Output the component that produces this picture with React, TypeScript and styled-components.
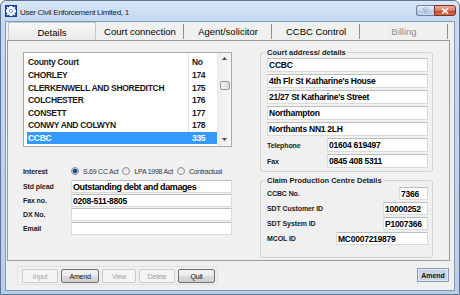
import styled, { createGlobalStyle } from 'styled-components'

const GlobalStyle = createGlobalStyle`
  html, body { margin: 0; padding: 0; }
  body {
    width: 460px;
    height: 295px;
    overflow: hidden;
    background: #fff;
    font-family: "Liberation Sans", Arial, sans-serif;
  }
  * { box-sizing: border-box; }
`

const Window = styled.div`
  width: 460px;
  height: 295px;
  display: flex;
  flex-direction: column;
  border: 1px solid #5e7592;
  border-radius: 6px 6px 0 0;
  background: linear-gradient(180deg, #d9e7f7 0px, #c5d9f0 20px, #b8cfea 100%);
`

const TitleBar = styled.div`
  height: 20px;
  display: flex;
  align-items: center;
  gap: 3px;
  padding: 0 3px 0 4px;
`

const TitleText = styled.span`
  font-size: 8px;
  letter-spacing: -0.3px;
  color: #1b1b1b;
  margin-top: 2px;
`

const CaptionButtons = styled.div`
  margin-left: auto;
  align-self: flex-start;
  margin-top: 4px;
  display: flex;
`

const HelpButton = styled.div`
  width: 18px;
  height: 11px;
  border: 1px solid #6f84a2;
  border-right: none;
  border-radius: 3px 0 0 3px;
  background: linear-gradient(180deg, #e4edf8 0%, #c6d6ea 50%, #b1c6e0 51%, #c9d9ed 100%);
  color: #fff;
  font-size: 8px;
  font-weight: bold;
  line-height: 9px;
  text-align: center;
  text-shadow: 0 0 1px #3e5572, 0 0 1px #3e5572;
`

const CloseButton = styled.div`
  width: 22px;
  height: 11px;
  border: 1px solid #7c2f25;
  border-radius: 0 3px 3px 0;
  background: linear-gradient(180deg, #eab2a3 0%, #d77a64 50%, #c6422a 51%, #d66a4e 100%);
  display: flex;
  align-items: center;
  justify-content: center;
`

const Client = styled.div`
  flex: 1;
  margin: 0 4px 3px;
  border: 1px solid #8499b6;
  background: #f0f0f0;
  display: flex;
  flex-direction: column;
  padding: 0 4px 0 1px;
`

const TabStrip = styled.div`
  height: 18px;
  display: flex;
  padding-left: 1px;
`

const Tab = styled.div<{ $boxed?: boolean; $disabled?: boolean }>`
  width: 88px;
  height: 18px;
  display: flex;
  align-items: center;
  justify-content: center;
  font-size: 9.5px;
  color: ${p => (p.$disabled ? '#8e8e8e' : '#000')};
  border: ${p => (p.$boxed ? '1px solid #c8c8c8' : 'none')};
  border-bottom: none;
  background: ${p =>
    p.$boxed
      ? 'linear-gradient(180deg, #f7f7f7, #eaeaea)'
      : 'linear-gradient(#8f8f8f, #8f8f8f) right 2px / 1px 15px no-repeat'};
  padding-top: 1px;
`

const Panel = styled.div`
  height: 221px;
  border: 1px solid #9a9a9a;
  padding: 7px 16px 0 15px;
  display: grid;
  grid-template-columns: 209px 173px;
  column-gap: 28px;
  align-items: start;
`

const LeftColumn = styled.div`
  padding-top: 4px;
  display: flex;
  flex-direction: column;
`

const ListBox = styled.div`
  height: 95px;
  border: 1px solid #a3a9b1;
  background: #fff;
  display: flex;
  padding-left: 3px;
`

const ListRows = styled.div`
  flex: 1;
  display: flex;
  flex-direction: column;
`

const ListRow = styled.div<{ $header?: boolean; $selected?: boolean }>`
  height: ${p => (p.$header ? 16 : 12.5)}px;
  flex: none;
  display: flex;
  align-items: center;
  font-size: 8.5px;
  font-weight: bold;
  letter-spacing: -0.3px;
  color: ${p => (p.$selected ? '#fff' : '#1a1a1a')};
  background: ${p => (p.$selected ? '#3399ff' : 'transparent')};
  padding-top: ${p => (p.$header ? 1 : 0)}px;
`

const NameCell = styled.div`
  width: 161px;
  padding-left: 1px;
  white-space: nowrap;
`

const NoCell = styled.div<{ $selected?: boolean }>`
  flex: 1;
  align-self: stretch;
  display: flex;
  align-items: center;
  padding-left: 3px;
  border-left: 1px solid ${p => (p.$selected ? 'transparent' : '#e3e3e3')};
`

const ScrollBar = styled.div`
  width: 14px;
  background: linear-gradient(90deg, #ededed, #f7f7f7);
  border-left: 1px solid #ececec;
  display: flex;
  flex-direction: column;
`

const ScrollArrow = styled.div<{ $h: number }>`
  height: ${p => p.$h}px;
  display: flex;
  align-items: center;
  justify-content: center;
`

const ScrollThumb = styled.div`
  height: 9px;
  margin: 18px 1px 0 2px;
  border: 1px solid #9b9b9b;
  border-radius: 2px;
  background: linear-gradient(90deg, #f2f2f2, #dcdcdc);
`

const Spacer = styled.div`
  flex: 1;
`

const InterestRow = styled.div`
  margin-top: 18px;
  height: 12px;
  display: flex;
  align-items: center;
`

const FormLabel = styled.span<{ $w?: number }>`
  width: ${p => (p.$w ? `${p.$w}px` : 'auto')};
  flex: ${p => (p.$w ? 'none' : '1')};
  font-size: 7px;
  font-weight: bold;
  letter-spacing: -0.1px;
  color: #222;
  white-space: nowrap;
`

const RadioGroup = styled.div`
  display: flex;
  align-items: center;
  gap: 4px;
`

const RadioItem = styled.label`
  display: flex;
  align-items: center;
  gap: 4px;
  font-size: 7px;
  letter-spacing: -0.25px;
  color: #333;
`

const RadioDot = styled.span<{ $on?: boolean }>`
  width: 8px;
  height: 8px;
  border-radius: 50%;
  border: 1px solid #8d8f92;
  background: ${p =>
    p.$on
      ? 'radial-gradient(circle, #1f447a 0 1.5px, #5f8bc4 2.3px, #e8eef6 2.9px)'
      : 'linear-gradient(180deg, #e2e2e2, #fafafa)'};
`

const FieldStack = styled.div`
  margin-top: 3px;
  display: flex;
  flex-direction: column;
  gap: 1px;
`

const FieldRow = styled.div<{ $h: number }>`
  height: ${p => p.$h}px;
  flex: none;
  display: flex;
  align-items: center;
`

const TextBox = styled.div<{ $w?: number; $h: number; $big?: boolean }>`
  height: ${p => p.$h}px;
  width: ${p => (p.$w ? `${p.$w}px` : 'auto')};
  flex: ${p => (p.$w ? 'none' : '1')};
  background: #fff;
  border: 1px solid #dadada;
  border-top-color: #bdbdbd;
  display: flex;
  align-items: center;
  padding: 0 1px;
  font-size: ${p => (p.$big ? 9 : 8.5)}px;
  letter-spacing: ${p => (p.$big ? -0.4 : -0.25)}px;
  font-weight: bold;
  color: #000;
  white-space: nowrap;
  overflow: hidden;
`

const AddressLine = styled(TextBox)`
  flex: none;
  width: 100%;
`

const RightColumn = styled.div`
  display: flex;
  flex-direction: column;
  gap: 4px;
`

const Group = styled.fieldset<{ $pt: number; $pb: number }>`
  margin: 0;
  min-width: 0;
  border: 1px solid #d2d2d2;
  border-radius: 3px;
  padding: ${p => p.$pt}px 4px ${p => p.$pb}px 6px;
`

const GroupBody = styled.div<{ $gap: number }>`
  display: flex;
  flex-direction: column;
  gap: ${p => p.$gap}px;
`

const Legend = styled.legend`
  font-size: 7.5px;
  line-height: 9px;
  font-weight: bold;
  color: #222;
  padding: 0 2px;
  margin-left: -2px;
`

const Footer = styled.div`
  flex: 1;
  display: flex;
  align-items: flex-start;
  padding: 5px 1px 0 10px;
`

const ButtonBox = styled.div`
  display: flex;
  gap: 3px;
  border: 1px solid #e0e0e0;
  border-radius: 2px;
  padding: 2px 2px 1px 4px;
`

const PushButton = styled.div<{ $w: number; $disabled?: boolean }>`
  width: ${p => p.$w}px;
  height: 14px;
  display: flex;
  align-items: center;
  justify-content: center;
  font-size: 7px;
  letter-spacing: -0.2px;
  border-radius: 2px;
  border: 1px solid ${p => (p.$disabled ? '#cacaca' : '#707070')};
  color: ${p => (p.$disabled ? '#a3a3a3' : '#111')};
  background: ${p =>
    p.$disabled
      ? '#f4f4f4'
      : 'linear-gradient(180deg, #f3f3f3 0%, #ebebeb 50%, #dddddd 51%, #cfcfcf 100%)'};
`

const AmendButton = styled.div`
  margin-left: auto;
  margin-top: 2px;
  width: 32px;
  height: 14px;
  display: flex;
  align-items: center;
  justify-content: center;
  font-size: 7px;
  font-weight: bold;
  color: #111;
  border: 1px solid #8a9bb4;
  box-shadow: inset 0 0 0 1px #e3eaf4;
  background: #c9d5e6;
`

const courts = [
  { name: 'CHORLEY', no: '174' },
  { name: 'CLERKENWELL AND SHOREDITCH', no: '175' },
  { name: 'COLCHESTER', no: '176' },
  { name: 'CONSETT', no: '177' },
  { name: 'CONWY AND COLWYN', no: '178' },
  { name: 'CCBC', no: '335', selected: true },
]

const address = [
  'CCBC',
  '4th Flr St Katharine\'s House',
  '21/27 St Katharine\'s Street',
  'Northampton',
  'Northants NN1 2LH',
]

const cpc = [
  { label: 'CCBC No.', value: '7366', w: 29 },
  { label: 'SDT Customer ID', value: '10000252', w: 45 },
  { label: 'SDT System ID', value: 'P1007366', w: 45 },
  { label: 'MCOL ID', value: 'MC0007219879', w: 92 },
]

function AppIcon() {
  return (
    <svg width="12" height="12" viewBox="0 0 12 12">
      <rect x="0.5" y="0.5" width="11" height="11" fill="#fff" stroke="#1c3c9c" />
      <path d="M1 1H5L1 5Z M11 1H7L11 5Z M1 11H5L1 7Z M11 11H7L11 7Z" fill="#1f48b8" />
      <rect x="4" y="4" width="4" height="4" fill="#1f48b8" />
      <path d="M2 2L10 10M10 2L2 10" stroke="#fff" strokeWidth="1.3" />
    </svg>
  )
}

function Arrow({ up }: { up?: boolean }) {
  return (
    <svg width="5" height="3" viewBox="0 0 5 3">
      <path d={up ? 'M0 3L2.5 0L5 3Z' : 'M0 0L2.5 3L5 0Z'} fill="#4a4a4a" />
    </svg>
  )
}

export default function App() {
  return (
    <>
      <GlobalStyle />
      <Window>
        <TitleBar>
          <AppIcon />
          <TitleText>User Civil Enforcement Limited, 1</TitleText>
          <CaptionButtons>
            <HelpButton>?</HelpButton>
            <CloseButton>
              <svg width="8" height="6" viewBox="0 0 8 6">
                <path d="M1 0.5L7 5.5M7 0.5L1 5.5" stroke="#fff" strokeWidth="1.6" />
              </svg>
            </CloseButton>
          </CaptionButtons>
        </TitleBar>

        <Client>
          <TabStrip>
            <Tab $boxed>Details</Tab>
            <Tab>Court connection</Tab>
            <Tab>Agent/solicitor</Tab>
            <Tab>CCBC Control</Tab>
            <Tab $disabled>Billing</Tab>
          </TabStrip>

          <Panel>
            <LeftColumn>
              <ListBox>
                <ListRows>
                  <ListRow $header>
                    <NameCell>County Court</NameCell>
                    <NoCell>No</NoCell>
                  </ListRow>
                  {courts.map(c => (
                    <ListRow key={c.no} $selected={c.selected}>
                      <NameCell>{c.name}</NameCell>
                      <NoCell $selected={c.selected}>{c.no}</NoCell>
                    </ListRow>
                  ))}
                </ListRows>
                <ScrollBar>
                  <ScrollArrow $h={10}><Arrow up /></ScrollArrow>
                  <ScrollThumb />
                  <Spacer />
                  <ScrollArrow $h={14}><Arrow /></ScrollArrow>
                </ScrollBar>
              </ListBox>

              <InterestRow>
                <FormLabel $w={48}>Interest</FormLabel>
                <RadioGroup>
                  <RadioItem><RadioDot $on />S.69 CC Act</RadioItem>
                  <RadioItem><RadioDot />LPA 1998 Act</RadioItem>
                  <RadioItem><RadioDot />Contractual</RadioItem>
                </RadioGroup>
              </InterestRow>

              <FieldStack>
                <FieldRow $h={13}>
                  <FormLabel $w={48}>Std plead</FormLabel>
                  <TextBox $h={13} $big>Outstanding debt and damages</TextBox>
                </FieldRow>
                <FieldRow $h={13}>
                  <FormLabel $w={48}>Fax no.</FormLabel>
                  <TextBox $h={13}>0208-511-8805</TextBox>
                </FieldRow>
                <FieldRow $h={13}>
                  <FormLabel $w={48}>DX No.</FormLabel>
                  <TextBox $h={13} />
                </FieldRow>
                <FieldRow $h={13}>
                  <FormLabel $w={48}>Email</FormLabel>
                  <TextBox $h={13} />
                </FieldRow>
              </FieldStack>
            </LeftColumn>

            <RightColumn>
              <Group $pt={1} $pb={3}>
                <Legend>Court address/ details</Legend>
                <GroupBody $gap={2}>
                  {address.map(line => (
                    <AddressLine key={line} $h={14}>{line}</AddressLine>
                  ))}
                  <FieldRow $h={14}>
                    <FormLabel>Telephone</FormLabel>
                    <TextBox $h={14} $w={101}>01604 619497</TextBox>
                  </FieldRow>
                  <FieldRow $h={14}>
                    <FormLabel>Fax</FormLabel>
                    <TextBox $h={14} $w={101}>0845 408 5311</TextBox>
                  </FieldRow>
                </GroupBody>
              </Group>

              <Group $pt={2} $pb={12}>
                <Legend>Claim Production Centre Details</Legend>
                <GroupBody $gap={2}>
                  {cpc.map(f => (
                    <FieldRow key={f.label} $h={13}>
                      <FormLabel>{f.label}</FormLabel>
                      <TextBox $h={13} $w={f.w}>{f.value}</TextBox>
                    </FieldRow>
                  ))}
                </GroupBody>
              </Group>
            </RightColumn>
          </Panel>

          <Footer>
            <ButtonBox>
              <PushButton $w={36} $disabled>Input</PushButton>
              <PushButton $w={38}>Amend</PushButton>
              <PushButton $w={34} $disabled>View</PushButton>
              <PushButton $w={36} $disabled>Delete</PushButton>
              <PushButton $w={37}>Quit</PushButton>
            </ButtonBox>
            <AmendButton>Amend</AmendButton>
          </Footer>
        </Client>
      </Window>
    </>
  )
}
